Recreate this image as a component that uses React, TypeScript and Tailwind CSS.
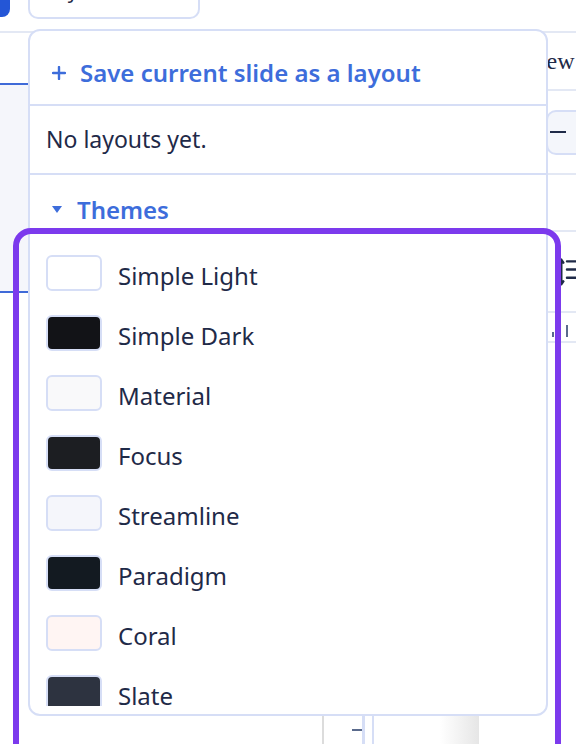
// Theme picker popover, open over the editor with the theme list highlighted.

const THEMES = [
  { name: 'Simple Light', swatch: 'bg-[#ffffff]' },
  { name: 'Simple Dark', swatch: 'bg-[#121317]' },
  { name: 'Material', swatch: 'bg-[#f9f9fa]' },
  { name: 'Focus', swatch: 'bg-[#1c1e22]' },
  { name: 'Streamline', swatch: 'bg-[#f5f6fb]' },
  { name: 'Paradigm', swatch: 'bg-[#131a21]' },
  { name: 'Coral', swatch: 'bg-[#fff5f3]' },
  { name: 'Slate', swatch: 'bg-[#2d3340]' }
]

function PlusIcon(): JSX.Element {
  return (
    <svg width="14" height="14" viewBox="0 0 14 14" fill="none" stroke="currentColor" strokeWidth="2.4" strokeLinecap="round">
      <path d="M7 1v12M1 7h12" />
    </svg>
  )
}

function CaretDown(): JSX.Element {
  return (
    <svg width="10" height="8" viewBox="0 0 10 8" fill="currentColor">
      <polygon points="0,0 10,0 5,7" />
    </svg>
  )
}

// line-height control: double arrow + lines
function LineHeightIcon(): JSX.Element {
  return (
    <svg width="22" height="36" viewBox="0 0 22 36" fill="none" stroke="currentColor" strokeWidth="3" strokeLinecap="round" strokeLinejoin="round">
      <path d="M4 3v30M1.5 6.5L4 3l2.5 3.5M1.5 29.5L4 33l2.5-3.5" />
      <path d="M11 5h11M11 15h11M11 25h11" />
    </svg>
  )
}

function ThemePopover(): JSX.Element {
  return (
    <div className="absolute left-[28px] top-[29px] flex h-[687px] w-[520px] flex-col overflow-hidden rounded-[12px] border-2 border-[#d6def6] bg-white pb-[8px]">
      <button type="button" className="flex h-[75px] shrink-0 items-center gap-[14px] border-b-2 border-[#d6def6] pl-[22px] pt-[10px] text-[24px] font-semibold text-[#3d6ddb]">
        <PlusIcon />
        <span>Save current slide as a layout</span>
      </button>
      <div className="flex h-[69px] shrink-0 items-center border-b-2 border-[#d6def6] pl-[16px] text-[23px] text-[#1f2a48]">
        No layouts yet.
      </div>
      <div className="flex h-[68px] shrink-0 items-center gap-[15px] pl-[22px] pt-[2px] text-[24px] font-semibold text-[#3d6ddb]">
        <CaretDown />
        <span>Themes</span>
      </div>
      <div className="min-h-0 flex-1 overflow-hidden">
        {THEMES.map((t) => (
          <div key={t.name} className="flex h-[60px] items-center gap-[16px] pl-[16px]">
            <span className={['h-[36px] w-[56px] shrink-0 rounded-[6px] border-2 border-[#d6def6]', t.swatch].join(' ')} />
            <span className="pt-[6px] text-[24px] text-[#1f2a48]">{t.name}</span>
          </div>
        ))}
      </div>
    </div>
  )
}

export default function App(): JSX.Element {
  return (
    <div className="relative flex h-[744px] w-[576px] flex-col overflow-hidden bg-white font-['Noto_Sans',sans-serif]">
      {/* toolbar, mostly scrolled out of view */}
      <div className="flex h-[33px] shrink-0 items-start gap-[18px] border-b-2 border-[#e3e8f4]">
        <div className="h-[17px] w-[10px] rounded-br-[8px] bg-[#2456d6]" />
        <div className="flex h-[19px] w-[172px] items-start overflow-hidden rounded-b-[10px] border-2 border-t-0 border-[#d6def6] pl-[16px]">
          <span className="mt-[-21px] text-[20px] leading-[24px] text-[#1f2a48]">Layouts</span>
        </div>
      </div>

      <div className="flex min-h-0 flex-1">
        {/* left rail */}
        <div className="flex w-[28px] shrink-0 flex-col">
          <div className="h-[50px]" />
          <div className="h-[210px] border-y-2 border-[#3f6ad8] bg-[#f5f6fb]" />
        </div>

        {/* canvas area */}
        <div className="flex min-w-0 flex-1 flex-col">
          <div className="flex-1" />
          <div className="flex h-[28px] items-stretch">
            <div className="w-[294px] shrink-0" />
            <div className="flex w-[40px] shrink-0 items-center justify-end border-l-2 border-[#dcdcdc]">
              <span className="h-[2px] w-[10px] bg-[#5a6a8c]" />
            </div>
            <div className="w-[10px] shrink-0 border-l-[3px] border-[#d6def6]" />
            <div className="w-[68px] shrink-0 border-l-2 border-[#d6def6]" />
            <div className="w-[39px] shrink-0 bg-gradient-to-r from-white to-[#e6e6e6]" />
          </div>
        </div>

        {/* right properties panel */}
        <div className="flex w-[60px] shrink-0 flex-col">
          <div className="flex h-[58px] items-center whitespace-nowrap border-b-2 border-[#e3e8f4] pl-[8px] font-['Liberation_Serif',serif] text-[24px] text-[#1f2a48]">
            View
          </div>
          <div className="flex h-[84px] items-center border-b-2 border-[#e3e8f4] pl-[30px]">
            <div className="flex h-[45px] w-[40px] items-center rounded-l-[10px] border-2 border-r-0 border-[#d6def6] bg-[#f4f6fb] pl-[2px]">
              <span className="h-[2px] w-[16px] bg-[#1f2a48]" />
            </div>
          </div>
          <div className="h-[57px] border-b-2 border-[#e3e8f4]" />
          <div className="flex h-[81px] items-center border-b-2 border-[#e3e8f4] pl-[42px] text-[#1f2a48]">
            <LineHeightIcon />
          </div>
          <div className="flex h-[30px] items-end gap-[12px] border-b-2 border-[#e3e8f4] pb-[4px] pl-[36px]">
            <span className="h-[5px] w-[2px] bg-[#5a6a8c]" />
            <span className="h-[12px] w-[2px] bg-[#5a6a8c]" />
          </div>
        </div>
      </div>

      <ThemePopover />

      {/* highlight ring around the theme list */}
      <div className="pointer-events-none absolute left-[13px] top-[228px] h-[540px] w-[548px] rounded-[18px] border-[6px] border-[#7c3aed]" />
    </div>
  )
}
